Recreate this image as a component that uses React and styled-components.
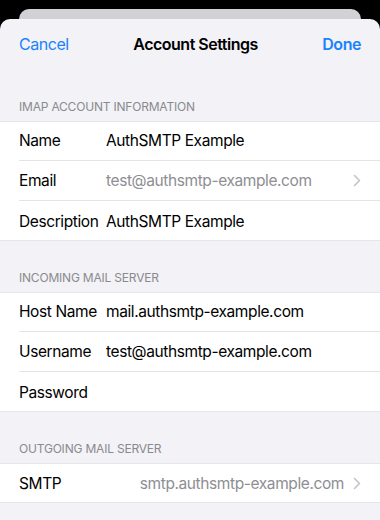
import React from "react";
import styled, { createGlobalStyle } from "styled-components";

const GlobalStyle = createGlobalStyle`
  body {
    margin: 0;
    background: #000;
    font-family: Inter, "Noto Sans", sans-serif;
    -webkit-font-smoothing: antialiased;
  }
`;

const sections = [
  {
    title: "IMAP Account Information",
    rows: [
      { label: "Name", value: "AuthSMTP Example" },
      { label: "Email", value: "test@authsmtp-example.com", muted: true, chevron: true },
      { label: "Description", value: "AuthSMTP Example" },
    ],
  },
  {
    title: "Incoming Mail Server",
    rows: [
      { label: "Host Name", value: "mail.authsmtp-example.com" },
      { label: "Username", value: "test@authsmtp-example.com" },
      { label: "Password", value: "" },
    ],
  },
  {
    title: "Outgoing Mail Server",
    rows: [
      { label: "SMTP", value: "smtp.authsmtp-example.com", muted: true, chevron: true, alignRight: true },
    ],
  },
];

function Chevron() {
  return (
    <svg width="8" height="13" viewBox="0 0 8 13">
      <path d="M1.5 1.5 L6.5 6.5 L1.5 11.5" fill="none" stroke="#c4c4c7" strokeWidth="1.6" strokeLinecap="round" strokeLinejoin="round" />
    </svg>
  );
}

function App() {
  return (
    <Screen>
      <GlobalStyle />
      <BackCard />
      <Sheet>
        <NavBar>
          <NavButton>Cancel</NavButton>
          <NavTitle>Account Settings</NavTitle>
          <NavButton $bold>Done</NavButton>
        </NavBar>
        {sections.map((section) => (
          <section key={section.title}>
            <SectionHeader>{section.title}</SectionHeader>
            <Group>
              {section.rows.map((row) => (
                <Row key={row.label}>
                  <RowInner>
                    <Label>{row.label}</Label>
                    <Value $muted={row.muted} $right={row.alignRight}>{row.value}</Value>
                    {row.chevron && (
                      <ChevronWrap>
                        <Chevron />
                      </ChevronWrap>
                    )}
                  </RowInner>
                </Row>
              ))}
            </Group>
          </section>
        ))}
      </Sheet>
    </Screen>
  );
}

const Screen = styled.div`
  width: 380px;
  height: 520px;
  padding-top: 9px;
  box-sizing: border-box;
  background: #000;
  display: flex;
  flex-direction: column;
  overflow: hidden;
`;

const BackCard = styled.div`
  height: 10px;
  margin: 0 19px;
  background: #d1d1d6;
  border-radius: 10px 10px 0 0;
  flex-shrink: 0;
`;

const Sheet = styled.div`
  flex: 1;
  background: #f2f2f7;
  border-radius: 10px 10px 0 0;
`;

const NavBar = styled.div`
  height: 50px;
  padding: 0 19px 1px;
  display: flex;
  align-items: center;
  justify-content: space-between;
`;

const NavButton = styled.span`
  font-size: 16px;
  color: #1a82fb;
  font-weight: ${(p) => (p.$bold ? 600 : 400)};
  letter-spacing: -0.45px;
`;

const NavTitle = styled.span`
  font-size: 16px;
  font-weight: 600;
  color: #000;
  letter-spacing: -0.5px;
`;

const SectionHeader = styled.div`
  height: 51px;
  box-sizing: border-box;
  padding: 0 19px 6px;
  display: flex;
  align-items: flex-end;
  font-size: 12px;
  line-height: 16px;
  text-transform: uppercase;
  color: #8a8a8e;
  letter-spacing: -0.2px;
`;

const Group = styled.div`
  background: #fff;
  box-shadow: inset 0 1px 0 #e6e6ea, inset 0 -1px 0 #e6e6ea;
`;

const Row = styled.div`
  padding-left: 19px;
  &:not(:last-child) > div {
    border-bottom: 1px solid #e4e4e8;
  }
`;

const RowInner = styled.div`
  height: 40px;
  box-sizing: border-box;
  display: flex;
  align-items: center;
  padding-right: 19px;
  font-size: 15.5px;
  letter-spacing: -0.4px;
`;

const Label = styled.span`
  width: 87px;
  flex-shrink: 0;
  color: #000;
  white-space: nowrap;
`;

const Value = styled.span`
  flex: 1;
  color: ${(p) => (p.$muted ? "#8e8e93" : "#000")};
  text-align: ${(p) => (p.$right ? "right" : "left")};
  white-space: nowrap;
`;

const ChevronWrap = styled.span`
  display: flex;
  margin-left: 9px;
`;

export default App;
